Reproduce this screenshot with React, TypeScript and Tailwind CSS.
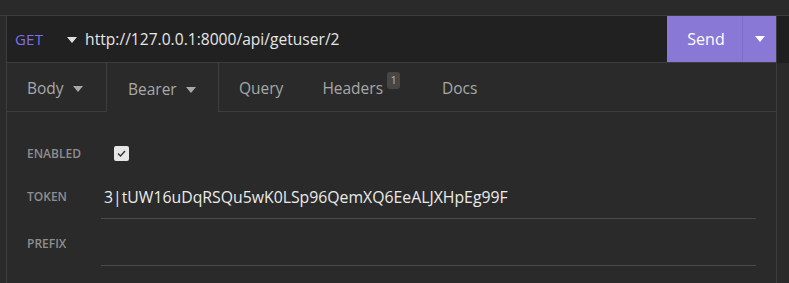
import React from "react";

const Caret = ({ className = "" }: { className?: string }) => (
  <svg width="10" height="6" viewBox="0 0 10 6" className={className}>
    <path d="M0 0 L10 0 L5 6 Z" fill="currentColor" />
  </svg>
);

export default function App() {
  const font = { fontFamily: '"Open Sans", "Noto Sans", sans-serif' };
  return (
    <div
      className="w-[789px] h-[283px] bg-[#2a2a2a] flex flex-col overflow-hidden"
      style={font}
    >
      <div className="h-[16px] border-b border-[#3d3d3d] shrink-0" />
      <div className="flex flex-1 min-h-0">
        <div className="w-[7px] border-r border-[#3d3d3d] shrink-0" />
        <div className="flex-1 flex flex-col min-w-0">
          {/* URL bar */}
          <div className="h-[47px] bg-[#212121] border-b border-[#3d3d3d] flex items-stretch shrink-0">
            <div className="flex items-center pl-[8px] pt-[1px]">
              <span className="text-[15px] text-[#7c70e6] tracking-[0.2px]">GET</span>
              <Caret className="ml-[24px] text-[#e0e0e0]" />
              <span className="ml-[8px] text-[15.6px] text-[#e6e6e6]">
                http://127.0.0.1:8000/api/getuser/2
              </span>
            </div>
            <div className="flex-1" />
            <div className="flex bg-[#8a78d6] text-white">
              <div className="w-[76px] flex items-center justify-center text-[16px] pl-[3px] border-r border-[#7e6dc8]">
                Send
              </div>
              <div className="w-[33px] flex items-center justify-center">
                <Caret />
              </div>
            </div>
          </div>
          {/* Tabs */}
          <div className="h-[49px] flex shrink-0 text-[15.5px] text-[#a8a8a8]">
            <div className="w-[100px] border-r border-b border-[#3d3d3d] flex items-center pl-[20px] pt-[4px]">
              Body
              <Caret className="ml-[9px] text-[#a8a8a8]" />
            </div>
            <div className="w-[112px] border-r border-[#3d3d3d] flex items-center pl-[21px] pt-[4px]">
              Bearer
              <Caret className="ml-[9px] text-[#a8a8a8]" />
            </div>
            <div className="flex-1 border-b border-[#3d3d3d] flex items-center pt-[4px]">
              <span className="ml-[20px]">Query</span>
              <span className="ml-[39px]">Headers</span>
              <span className="ml-[4px] -mt-[18px] bg-[#464646] rounded-[3px] text-[11px] w-[13px] h-[17px] flex items-center justify-center text-[#b8b8b8]">
                1
              </span>
              <span className="ml-[42px]">Docs</span>
            </div>
          </div>
          {/* Content */}
          <div className="flex-1 px-[20px] pt-[23px] flex flex-col">
            <div className="flex items-center h-[37px]">
              <div className="w-[87px] text-[12px] font-semibold text-[#8e8e8e]">ENABLED</div>
              <div className="w-[15px] h-[15px] bg-[#e6e6e6] rounded-[2px] flex items-center justify-center">
                <svg width="9" height="7" viewBox="0 0 9 7">
                  <path d="M1 3.5 L3.5 6 L8 1" stroke="#333" strokeWidth="1.4" fill="none" />
                </svg>
              </div>
            </div>
            <div className="flex items-stretch h-[47px]">
              <div className="w-[74px] text-[12px] font-semibold text-[#8e8e8e] flex items-center pt-[3px]">TOKEN</div>
              <div className="flex-1 border-b border-[#4a4a4a] flex items-center pl-[3px] pt-[5px] text-[15.8px] text-[#ebebeb]">
                3|tUW16uDqRSQu5wK0LSp96QemXQ6EeALJXHpEg99F
              </div>
            </div>
            <div className="flex items-stretch h-[47px]">
              <div className="w-[74px] text-[12px] font-semibold text-[#8e8e8e] flex items-center pt-[2px]">PREFIX</div>
              <div className="flex-1 border-b border-[#4a4a4a]" />
            </div>
          </div>
        </div>
        <div className="w-[13px] border-l border-[#3d3d3d] shrink-0 flex flex-col">
          <div className="h-[47px] bg-[#1f1f1f]" />
        </div>
      </div>
    </div>
  );
}
